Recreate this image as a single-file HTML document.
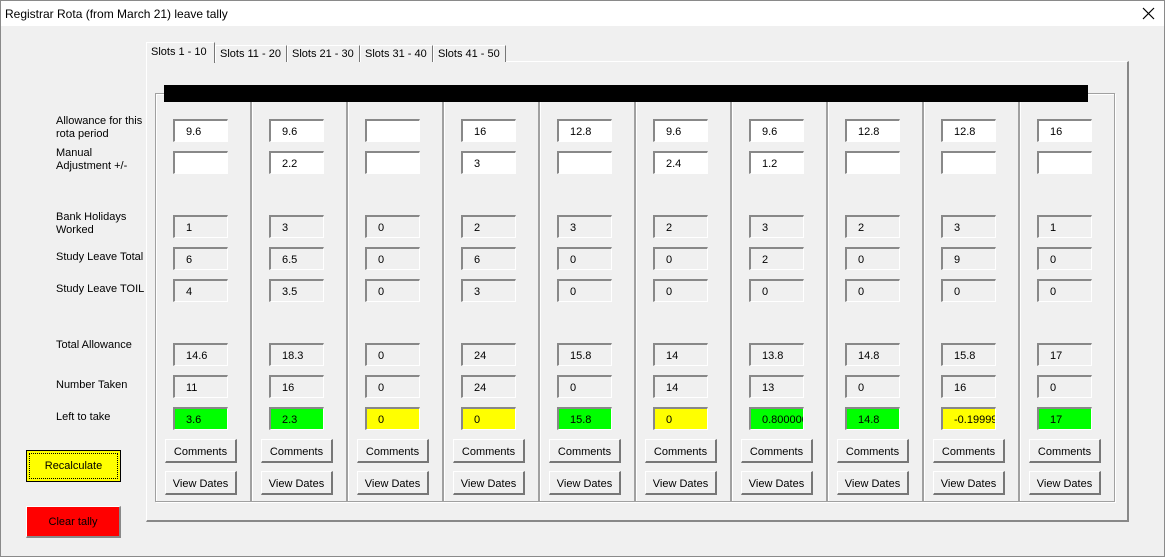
<!DOCTYPE html><html><head><style>
*{margin:0;padding:0;box-sizing:border-box}
body{width:1165px;height:557px;background:#f0f0f0;font-family:"Liberation Sans",Tahoma,sans-serif;font-size:11px;color:#000;position:relative;overflow:hidden}
.a{position:absolute}
.win{left:0;top:0;width:1165px;height:557px;border:1px solid #8a8a8a}
.title{left:1px;top:1px;width:1163px;height:25px;background:#fff;font-size:12px;padding:6px 0 0 4px}
.tab{top:45px;height:17px;background:#f0f0f0;border-top:1px solid #fff;border-left:1px solid #fff;border-right:1px solid #777;padding:2px 0 0 4px;font-size:11px}
.page{left:146px;top:61px;width:983px;height:461px;border-top:1px solid #fff;border-left:1px solid #fff;border-right:2px solid #888;border-bottom:2px solid #888}
.fr{top:93px;width:96px;height:409px;border:1px solid #a0a0a0;box-shadow:inset 1px 1px 0 #fff,1px 1px 0 #fff}
.bar{left:164px;top:85px;width:924px;height:17px;background:#000}
.lab{left:56px;line-height:13px;font-size:11px}
.b{width:55px;height:23px;border-top:2px solid #888;border-left:2px solid #888;border-bottom:1px solid #fff;border-right:1px solid #fff;padding:5px 0 0 11px;font-size:11px;white-space:nowrap;overflow:hidden}
.w{background:#fff}
.g{background:#00ff00}
.y{background:#ffff00}
.btn{width:72px;height:24px;background:#f0f0f0;border-top:1px solid #fff;border-left:1px solid #fff;border-right:2px solid #777;border-bottom:2px solid #777;text-align:center;padding-top:6px;font-size:11px}
</style></head><body>
<div class="a win"></div>
<div class="a title">Registrar Rota (from March 21) leave tally</div>
<svg class="a" style="left:1142px;top:7px" width="13" height="13"><path d="M1 1L12 12M12 1L1 12" stroke="#000" stroke-width="1.2"/></svg>
<div class="a page"></div>
<div class="a tab" style="left:146px;top:42px;height:21px;width:69px;padding-top:3px;z-index:2">Slots 1 - 10</div>
<div class="a tab" style="left:215px;width:72px">Slots 11 - 20</div>
<div class="a tab" style="left:287px;width:73px">Slots 21 - 30</div>
<div class="a tab" style="left:360px;width:73px">Slots 31 - 40</div>
<div class="a tab" style="left:433px;width:73px">Slots 41 - 50</div>
<div class="a fr" style="left:155px"></div><div class="a fr" style="left:251px"></div><div class="a fr" style="left:347px"></div><div class="a fr" style="left:443px"></div><div class="a fr" style="left:539px"></div><div class="a fr" style="left:635px"></div><div class="a fr" style="left:731px"></div><div class="a fr" style="left:827px"></div><div class="a fr" style="left:923px"></div><div class="a fr" style="left:1019px"></div>
<div class="a bar"></div>
<div class="a lab" style="top:115px">Allowance for this<br>rota period</div>
<div class="a lab" style="top:147px">Manual<br>Adjustment +/-</div>
<div class="a lab" style="top:211px">Bank Holidays<br>Worked</div>
<div class="a lab" style="top:251px">Study Leave Total</div>
<div class="a lab" style="top:283px">Study Leave TOIL</div>
<div class="a lab" style="top:339px">Total Allowance</div>
<div class="a lab" style="top:379px">Number Taken</div>
<div class="a lab" style="top:411px">Left to take</div>
<div class="a" style="left:26px;top:450px;width:95px;height:32px;border:1px solid #000;background:#ffff00;text-align:center;padding-top:9px;outline:1px dotted #000;outline-offset:-4px">Recalculate</div>
<div class="a" style="left:26px;top:506px;width:95px;height:32px;background:#ff0000;border-top:1px solid #fff;border-left:1px solid #fff;border-right:2px solid #888;border-bottom:2px solid #888;text-align:center;padding-top:9px">Clear tally</div>

<div class="a b w" style="left:173px;top:119px">9.6</div><div class="a b w" style="left:173px;top:151px"></div><div class="a b" style="left:173px;top:215px">1</div><div class="a b" style="left:173px;top:247px">6</div><div class="a b" style="left:173px;top:279px">4</div><div class="a b" style="left:173px;top:343px">14.6</div><div class="a b" style="left:173px;top:375px">11</div><div class="a b g" style="left:173px;top:407px">3.6</div><div class="a btn" style="left:165px;top:439px">Comments</div><div class="a btn" style="left:165px;top:471px">View Dates</div>
<div class="a b w" style="left:269px;top:119px">9.6</div><div class="a b w" style="left:269px;top:151px">2.2</div><div class="a b" style="left:269px;top:215px">3</div><div class="a b" style="left:269px;top:247px">6.5</div><div class="a b" style="left:269px;top:279px">3.5</div><div class="a b" style="left:269px;top:343px">18.3</div><div class="a b" style="left:269px;top:375px">16</div><div class="a b g" style="left:269px;top:407px">2.3</div><div class="a btn" style="left:261px;top:439px">Comments</div><div class="a btn" style="left:261px;top:471px">View Dates</div>
<div class="a b w" style="left:365px;top:119px"></div><div class="a b w" style="left:365px;top:151px"></div><div class="a b" style="left:365px;top:215px">0</div><div class="a b" style="left:365px;top:247px">0</div><div class="a b" style="left:365px;top:279px">0</div><div class="a b" style="left:365px;top:343px">0</div><div class="a b" style="left:365px;top:375px">0</div><div class="a b y" style="left:365px;top:407px">0</div><div class="a btn" style="left:357px;top:439px">Comments</div><div class="a btn" style="left:357px;top:471px">View Dates</div>
<div class="a b w" style="left:461px;top:119px">16</div><div class="a b w" style="left:461px;top:151px">3</div><div class="a b" style="left:461px;top:215px">2</div><div class="a b" style="left:461px;top:247px">6</div><div class="a b" style="left:461px;top:279px">3</div><div class="a b" style="left:461px;top:343px">24</div><div class="a b" style="left:461px;top:375px">24</div><div class="a b y" style="left:461px;top:407px">0</div><div class="a btn" style="left:453px;top:439px">Comments</div><div class="a btn" style="left:453px;top:471px">View Dates</div>
<div class="a b w" style="left:557px;top:119px">12.8</div><div class="a b w" style="left:557px;top:151px"></div><div class="a b" style="left:557px;top:215px">3</div><div class="a b" style="left:557px;top:247px">0</div><div class="a b" style="left:557px;top:279px">0</div><div class="a b" style="left:557px;top:343px">15.8</div><div class="a b" style="left:557px;top:375px">0</div><div class="a b g" style="left:557px;top:407px">15.8</div><div class="a btn" style="left:549px;top:439px">Comments</div><div class="a btn" style="left:549px;top:471px">View Dates</div>
<div class="a b w" style="left:653px;top:119px">9.6</div><div class="a b w" style="left:653px;top:151px">2.4</div><div class="a b" style="left:653px;top:215px">2</div><div class="a b" style="left:653px;top:247px">0</div><div class="a b" style="left:653px;top:279px">0</div><div class="a b" style="left:653px;top:343px">14</div><div class="a b" style="left:653px;top:375px">14</div><div class="a b y" style="left:653px;top:407px">0</div><div class="a btn" style="left:645px;top:439px">Comments</div><div class="a btn" style="left:645px;top:471px">View Dates</div>
<div class="a b w" style="left:749px;top:119px">9.6</div><div class="a b w" style="left:749px;top:151px">1.2</div><div class="a b" style="left:749px;top:215px">3</div><div class="a b" style="left:749px;top:247px">2</div><div class="a b" style="left:749px;top:279px">0</div><div class="a b" style="left:749px;top:343px">13.8</div><div class="a b" style="left:749px;top:375px">13</div><div class="a b g" style="left:749px;top:407px">0.800000</div><div class="a btn" style="left:741px;top:439px">Comments</div><div class="a btn" style="left:741px;top:471px">View Dates</div>
<div class="a b w" style="left:845px;top:119px">12.8</div><div class="a b w" style="left:845px;top:151px"></div><div class="a b" style="left:845px;top:215px">2</div><div class="a b" style="left:845px;top:247px">0</div><div class="a b" style="left:845px;top:279px">0</div><div class="a b" style="left:845px;top:343px">14.8</div><div class="a b" style="left:845px;top:375px">0</div><div class="a b g" style="left:845px;top:407px">14.8</div><div class="a btn" style="left:837px;top:439px">Comments</div><div class="a btn" style="left:837px;top:471px">View Dates</div>
<div class="a b w" style="left:941px;top:119px">12.8</div><div class="a b w" style="left:941px;top:151px"></div><div class="a b" style="left:941px;top:215px">3</div><div class="a b" style="left:941px;top:247px">9</div><div class="a b" style="left:941px;top:279px">0</div><div class="a b" style="left:941px;top:343px">15.8</div><div class="a b" style="left:941px;top:375px">16</div><div class="a b y" style="left:941px;top:407px">-0.19999</div><div class="a btn" style="left:933px;top:439px">Comments</div><div class="a btn" style="left:933px;top:471px">View Dates</div>
<div class="a b w" style="left:1037px;top:119px">16</div><div class="a b w" style="left:1037px;top:151px"></div><div class="a b" style="left:1037px;top:215px">1</div><div class="a b" style="left:1037px;top:247px">0</div><div class="a b" style="left:1037px;top:279px">0</div><div class="a b" style="left:1037px;top:343px">17</div><div class="a b" style="left:1037px;top:375px">0</div><div class="a b g" style="left:1037px;top:407px">17</div><div class="a btn" style="left:1029px;top:439px">Comments</div><div class="a btn" style="left:1029px;top:471px">View Dates</div>
</body></html>
